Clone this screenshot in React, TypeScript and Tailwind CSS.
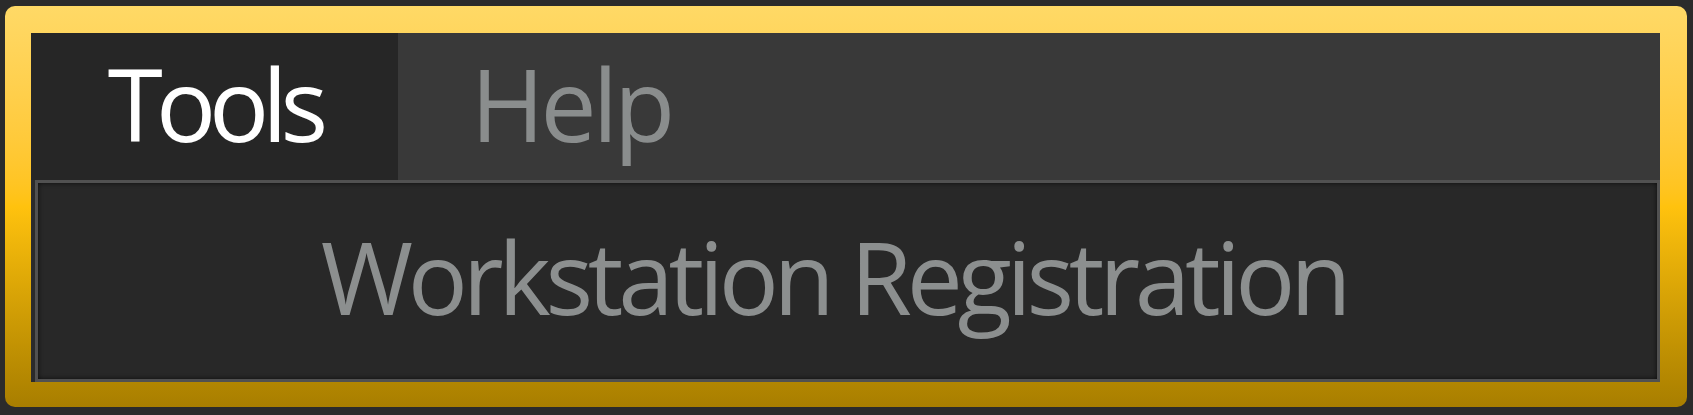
import React from 'react';

// Menu strip with a "Tools" tab open and its single entry below
const tabs = [
  { label: 'Tools', active: true },
  { label: 'Help', active: false },
];

const App: React.FC = () => {
  return (
    <div className="w-[1693px] h-[415px] bg-[#2b2b2b] pt-[6px] pl-[5px] font-['Open_Sans',sans-serif]">
      <div className="w-[1682px] h-[401px] rounded-[10px] bg-gradient-to-b from-[#ffd966] via-[#ffc20e] to-[#a87e00] pt-[27px] pl-[26px] pr-[27px] pb-[25px]">
        <div className="h-full flex flex-col bg-[#2b2b2b]">
          <div className="h-[147px] flex bg-[#393939]">
            {tabs.map((t) => (
              <div
                key={t.label}
                className={`flex items-center justify-center text-[100px] leading-none pb-[8px] ${
                  t.active
                    ? 'w-[367px] bg-[#262626] text-white tracking-[-7px]'
                    : 'w-[346px] text-[#8a8d8d] tracking-[-4px]'
                }`}
              >
                {t.label}
              </div>
            ))}
          </div>
          <div className="flex-1 pl-[4px]">
            <div className="h-full border-[3px] border-[#515151] bg-[#282828] shadow-[inset_0_0_5px_rgba(0,0,0,0.7)] flex items-center justify-center pr-[28px] pb-[11px]">
              <span className="text-[100px] leading-none tracking-[-5.3px] text-[#8c8f8f]">Workstation Registration</span>
            </div>
          </div>
        </div>
      </div>
    </div>
  );
};

export default App;
